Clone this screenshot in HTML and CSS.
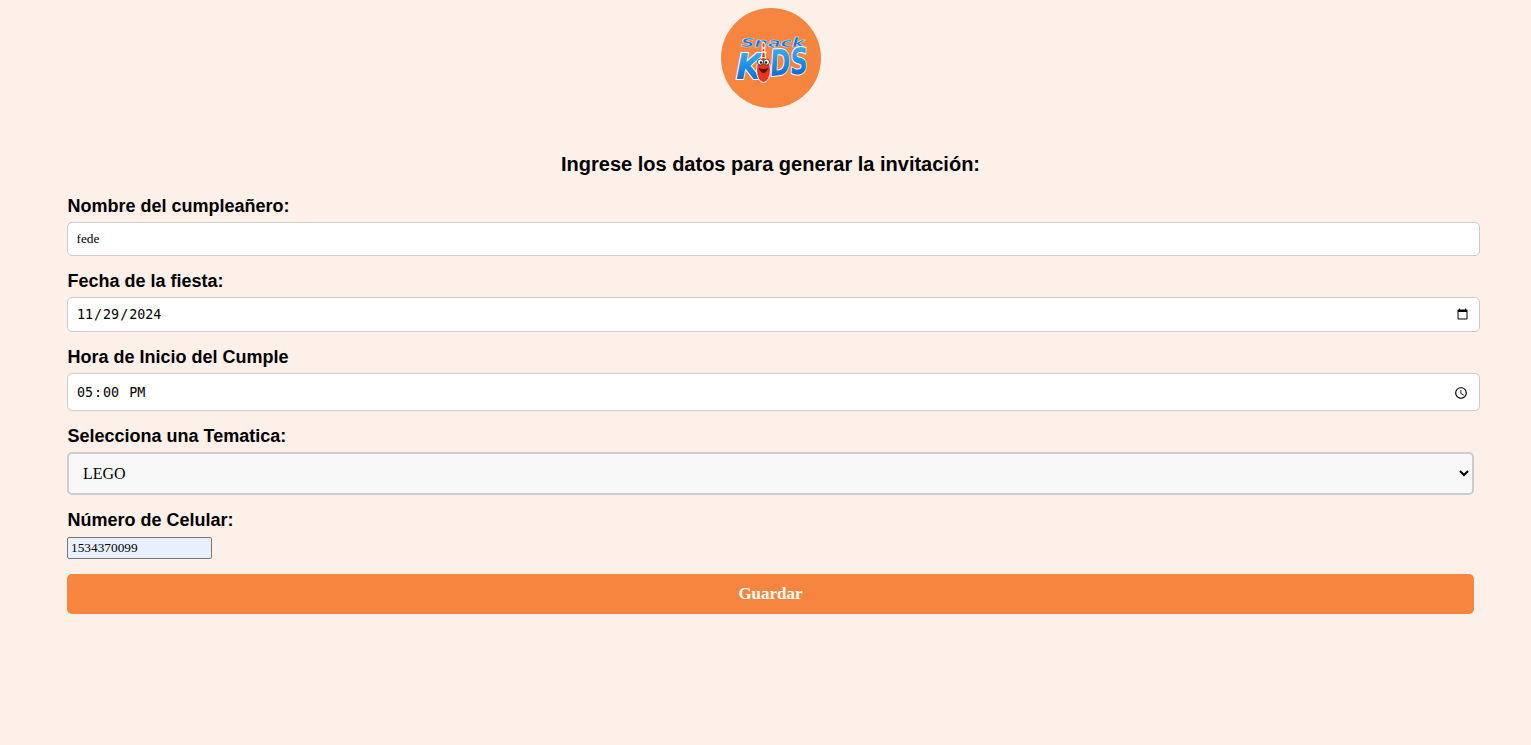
FILE: index.html
```html
<!DOCTYPE html>
<html lang="es">
<head>
<meta charset="utf-8">
<title>Snack Kids</title>
<link rel="stylesheet" href="styles.css">
</head>
<body>
<main class="page">
  <div class="logo-row">
    <svg class="logo" viewBox="0 0 100 100" width="100" height="100" aria-label="Snack Kids">
      <defs>
        <linearGradient id="blue" x1="0" y1="0" x2="0" y2="1">
          <stop offset="0" stop-color="#4fb8f5"/>
          <stop offset="0.55" stop-color="#1a8be6"/>
          <stop offset="1" stop-color="#0c55c0"/>
        </linearGradient>
      </defs>
      <circle cx="50" cy="50" r="50" fill="#f68540"/>
      <text class="logo-snack" transform="translate(20 39) scale(1.45 1)">Snack</text>
      <text class="logo-kids" transform="translate(15 71) scale(.95 1)">K</text>
      <text class="logo-kids" transform="translate(50 68) rotate(-4) scale(.68 1)">DS</text>
      <path d="M38.500 62 L40.500 45 Q41 40 40.500 37 Q40.500 34 42.500 34 Q44.500 34 44.500 37 Q44 40 44.500 45 L46.500 62 Z" fill="#fff"/>
      <path d="M40 62 L41.500 45 Q42 40 41.500 37 Q41.500 35 42.500 35 Q43.500 35 43.500 37 Q43 40 43.500 45 L45 62 Z" fill="#e8401f"/>
      <path d="M41 40 L44 40 M41 44 L44 44" stroke="#fff" stroke-width="1.500"/>
      <ellipse cx="42.500" cy="62" rx="7" ry="12.500" fill="#e8341a" stroke="#fff" stroke-width="1"/>
      <circle cx="39.500" cy="54" r="3" fill="#fff" stroke="#222" stroke-width=".8"/>
      <circle cx="45.500" cy="54" r="3" fill="#fff" stroke="#222" stroke-width=".8"/>
      <circle cx="40" cy="54.500" r="1.200" fill="#111"/>
      <circle cx="45" cy="54.500" r="1.200" fill="#111"/>
      <path d="M37.500 60 Q42.500 70 47.500 60 Q42.500 62 37.500 60Z" fill="#5a0d05"/>
    </svg>
  </div>
  <h2 class="title">Ingrese los datos para generar la invitación:</h2>
  <form class="form">
    <label class="label" for="nombre">Nombre del cumpleañero:</label>
    <input class="field field-name" id="nombre" type="text" value="fede">
    <label class="label" for="fecha">Fecha de la fiesta:</label>
    <input class="field field-date" id="fecha" type="date" value="2024-11-29">
    <label class="label" for="hora">Hora de Inicio del Cumple</label>
    <input class="field field-time" id="hora" type="time" value="17:00">
    <label class="label" for="tema">Selecciona una Tematica:</label>
    <select class="select" id="tema"><option>LEGO</option></select>
    <label class="label label-phone" for="cel">Número de Celular:</label>
    <input class="phone" id="cel" type="tel" value="1534370099">
    <button class="save" type="button">Guardar</button>
  </form>
</main>
</body>
</html>
```

FILE: styles.css
```css
html, body {
  margin: 0;
  padding: 0;
}
body {
  background: #fdf0e8;
  color: #000;
  font-family: "Liberation Sans", Arial, sans-serif;
  min-height: 745px;
}
.page {
  box-sizing: border-box;
  width: 1531px;
  padding: 8px 0 0 67px;
}
.logo-row {
  width: 1407px;
  display: flex;
  justify-content: center;
}
.logo {
  display: block;
  margin-left: 1px;
  overflow: visible;
}
.logo-snack {
  font-family: "DejaVu Sans", sans-serif;
  font-weight: 700;
  font-style: italic;
  font-size: 13px;
  fill: #1a6fd0;
  stroke: #bfe3fa;
  stroke-width: .5px;
}
.logo-kids {
  font-family: "DejaVu Sans", sans-serif;
  font-weight: 700;
  font-style: italic;
  font-size: 36px;
  fill: url(#blue);
  stroke: #fff;
  stroke-width: 2px;
  paint-order: stroke;
}
.title {
  width: 1407px;
  margin: 45px 0 0;
  text-align: center;
  font-size: 20px;
  line-height: 23px;
  font-weight: 700;
}
.form {
  width: 1407px;
  margin-top: 20px;
  display: flex;
  flex-direction: column;
  align-items: flex-start;
}
.label {
  display: block;
  padding-left: .5px;
  font-size: 18px;
  line-height: 21px;
  font-weight: 700;
  margin-bottom: 5px;
}
.label-phone {
  margin-bottom: 6px;
}
.field {
  box-sizing: border-box;
  width: 1413px;
  margin: 0 0 15px;
  padding: 0 8px;
  background: #fff;
  color: #000;
  border: 1px solid #ccc;
  border-radius: 5px;
}
.field-name {
  height: 34px;
  padding-left: 8.5px;
  font: 13.333px "Liberation Serif", serif;
}
.field-date {
  height: 35px;
  font-size: 13.333px;
  font-family: monospace;
}
.field-time {
  height: 38px;
  padding-top: 2px;
  font-size: 13.333px;
  font-family: monospace;
}
.select {
  box-sizing: border-box;
  width: 1407px;
  height: 43px;
  margin: 0 0 15px;
  padding: 0 10px;
  background: #f8f8f8;
  color: #000;
  border: 2px solid #ccc;
  border-radius: 5px;
  font: 16px "Liberation Serif", serif;
}
.phone {
  box-sizing: border-box;
  width: 145px;
  height: 22px;
  margin: 0 0 15px;
  padding: 1px 3px;
  background: #e8f0fe;
  color: #000;
  border: 1px solid #767676;
  border-radius: 2px;
  font: 13.333px "Liberation Serif", serif;
}
.save {
  display: block;
  width: 1407px;
  height: 40px;
  padding: 0;
  border: 0;
  border-radius: 5px;
  background: #f68540;
  color: #fff;
  font: 700 17px "Liberation Serif", serif;
}
```
